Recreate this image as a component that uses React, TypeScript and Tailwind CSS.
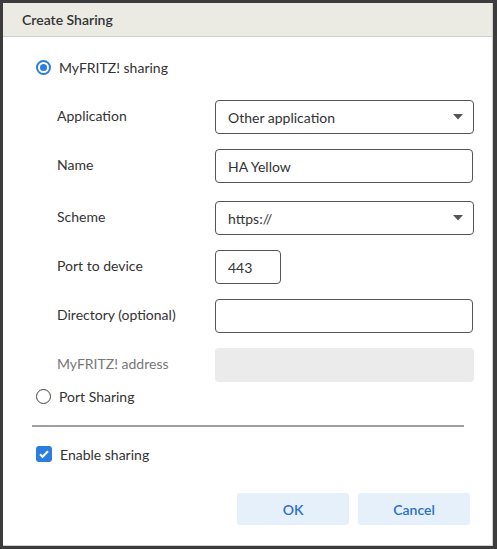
import React from "react";

const font = { fontFamily: "Lato, 'Open Sans', sans-serif" };

function Radio({ checked }: { checked?: boolean }) {
  return (
    <span
      className={
        checked
          ? "flex h-[15px] w-[15px] items-center justify-center rounded-full border-2 border-[#2b7de0] bg-white"
          : "flex h-[15px] w-[15px] items-center justify-center rounded-full border-[1.5px] border-[#444] bg-white"
      }
    >
      {checked && <span className="h-[7px] w-[7px] rounded-full bg-[#2b7de0]" />}
    </span>
  );
}

function Caret() {
  return (
    <svg width="10" height="6" viewBox="0 0 10 6" className="text-[#555]">
      <path d="M0 0h10L5 5.5z" fill="currentColor" />
    </svg>
  );
}

function Field({
  label,
  children,
  muted,
  className,
}: {
  label: string;
  children: React.ReactNode;
  muted?: boolean;
  className?: string;
}) {
  return (
    <div className={"flex items-center " + (className ?? "")}>
      <span className={"-mt-[3px] w-[158px] text-[14px] " + (muted ? "text-[#777]" : "text-[#333]")}>{label}</span>
      {children}
    </div>
  );
}

const box =
  "flex h-[34px] items-center rounded-[4px] border border-[#555] bg-white px-[12px] text-[14px] text-[#333]";

export default function App() {
  return (
    <div className="h-[549px] w-[497px] bg-[#3c3c3c] pl-[3px] pt-[3px]" style={font}>
      <div className="flex h-[543px] w-[490px] flex-col border-r border-b border-[#cfcfcf] bg-white">
        <div className="flex h-[34px] items-center border-b border-[#d0d0d0] bg-[#ebebe4] pl-[19px] text-[14px] font-semibold text-[#333]">
          Create Sharing
        </div>

        <div className="flex flex-col pl-[33px] pr-[18px]">
          <label className="mt-[20px] flex h-[20px] items-center gap-[8px] text-[14px] text-[#333]">
            <Radio checked />
            MyFRITZ! sharing
          </label>

          <div className="flex flex-col pl-[21px]">
            <Field label="Application" className="mt-[23px]">
              <div className={box + " w-[259px] justify-between pr-[10px]"}>
                <span>Other application</span>
                <Caret />
              </div>
            </Field>
            <Field label="Name" className="mt-[15px]">
              <div className={box + " w-[258px]"}>HA Yellow</div>
            </Field>
            <Field label="Scheme" className="mt-[18px]">
              <div className={box + " w-[259px] justify-between pr-[10px]"}>
                <span>https://</span>
                <Caret />
              </div>
            </Field>
            <Field label="Port to device" className="mt-[15px]">
              <div className={box + " w-[66px]"}>443</div>
            </Field>
            <Field label="Directory (optional)" className="mt-[15px]">
              <div className={box + " w-[258px]"} />
            </Field>
            <Field label="MyFRITZ! address" muted className="mt-[15px]">
              <div className="h-[34px] w-[259px] rounded-[4px] bg-[#ebebeb]" />
            </Field>
          </div>

          <label className="mt-[4px] flex h-[20px] items-center gap-[8px] text-[14px] text-[#333]">
            <Radio />
            Port Sharing
          </label>

          <div className="ml-[-4px] mt-[19px] h-[2px] w-[432px] bg-[#a0a0a0]" />

          <label className="mt-[17px] flex h-[20px] items-center gap-[8px] text-[14px] text-[#333]">
            <span className="flex h-[16px] w-[16px] items-center justify-center rounded-[3px] bg-[#2b7de0]">
              <svg width="12" height="12" viewBox="0 0 12 12">
                <path d="M2 6.2l2.6 2.6L10 3.2" fill="none" stroke="white" strokeWidth="2" />
              </svg>
            </span>
            Enable sharing
          </label>

          <div className="mt-[29px] flex justify-end gap-[9px] pr-[4px]">
            <button className="h-[32px] w-[112px] rounded-[3px] bg-[#e6f0fa] text-[14px] font-semibold text-[#2a6fc9]">
              OK
            </button>
            <button className="h-[32px] w-[112px] rounded-[3px] bg-[#e6f0fa] text-[14px] font-semibold text-[#2a6fc9]">
              Cancel
            </button>
          </div>
        </div>
      </div>
    </div>
  );
}
